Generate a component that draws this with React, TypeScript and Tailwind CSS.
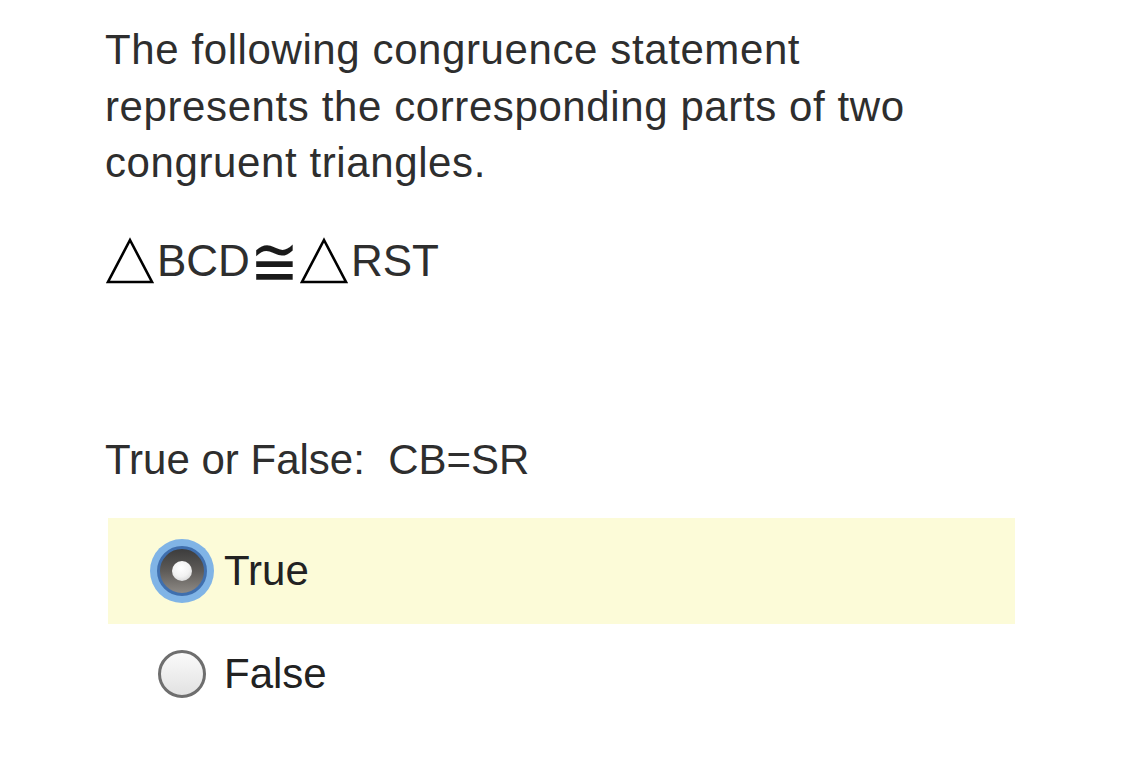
import React from "react";

const font = { fontFamily: '"Liberation Sans", Arial, sans-serif' };

function SelectedRadio() {
  return (
    <span className="flex h-[64px] w-[64px] items-center justify-center rounded-full bg-[#80b4e6]">
      <span className="flex h-[50px] w-[50px] items-center justify-center rounded-full border-[3px] border-[#3f6fae] bg-[linear-gradient(180deg,#3c3c3c_0%,#5e5b58_50%,#8e8a85_100%)]">
        <span className="h-[20px] w-[20px] rounded-full bg-[radial-gradient(circle_at_45%_35%,#ffffff_0%,#f2f2f2_50%,#c8c8c8_100%)]" />
      </span>
    </span>
  );
}

function EmptyRadio() {
  return (
    <span className="flex h-[64px] w-[64px] items-center justify-center">
      <span className="h-[48px] w-[48px] rounded-full border-[3px] border-[#6e6e6e] bg-[linear-gradient(180deg,#fafafa_0%,#e2e2e2_100%)]" />
    </span>
  );
}

function Triangle() {
  return (
    <svg width="50" height="48" viewBox="0 0 50 48" className="shrink-0">
      <path d="M25 3 L47 45 L3 45 Z" fill="none" stroke="#000" strokeWidth="2.6" strokeLinejoin="miter" />
    </svg>
  );
}

export default function App() {
  return (
    <div className="min-h-[776px] w-[1122px] bg-white text-[#2e2e2e]" style={font}>
      <div className="pl-[105px] pr-[100px] pt-[22px]">
        <p className="w-[880px] text-[42px] leading-[56.5px] tracking-[0.6px]">
          The following congruence statement represents the corresponding parts of two congruent triangles.
        </p>

        <div className="mt-[45px] flex h-[48px] items-end text-[44px] leading-none">
          <Triangle />
          <span className="mb-[2px] ml-[2px]">BCD</span>
          <span
            className="mb-[-12px] inline-block origin-bottom scale-y-[1.2] text-[58px] font-extralight leading-none text-[#1a1a1a]"
            style={{ fontFamily: '"DejaVu Sans ExtraLight", "DejaVu Sans", sans-serif' }}
          >
            ≅
          </span>
          <Triangle />
          <span className="mb-[2px] ml-[2px]">RST</span>
        </div>

        <p className="mt-[147px] text-[42px] leading-[56px] whitespace-pre">True or False:  CB=SR</p>
      </div>

      <div className="ml-[108px] mt-[30px] w-[907px]">
        <div className="flex h-[106px] items-center gap-[10px] bg-[#fcfbd8] pl-[42px]">
          <SelectedRadio />
          <span className="text-[42px] text-[#222]">True</span>
        </div>
        <div className="flex h-[100px] items-center gap-[10px] pl-[42px]">
          <EmptyRadio />
          <span className="text-[42px] text-[#222]">False</span>
        </div>
      </div>
    </div>
  );
}
